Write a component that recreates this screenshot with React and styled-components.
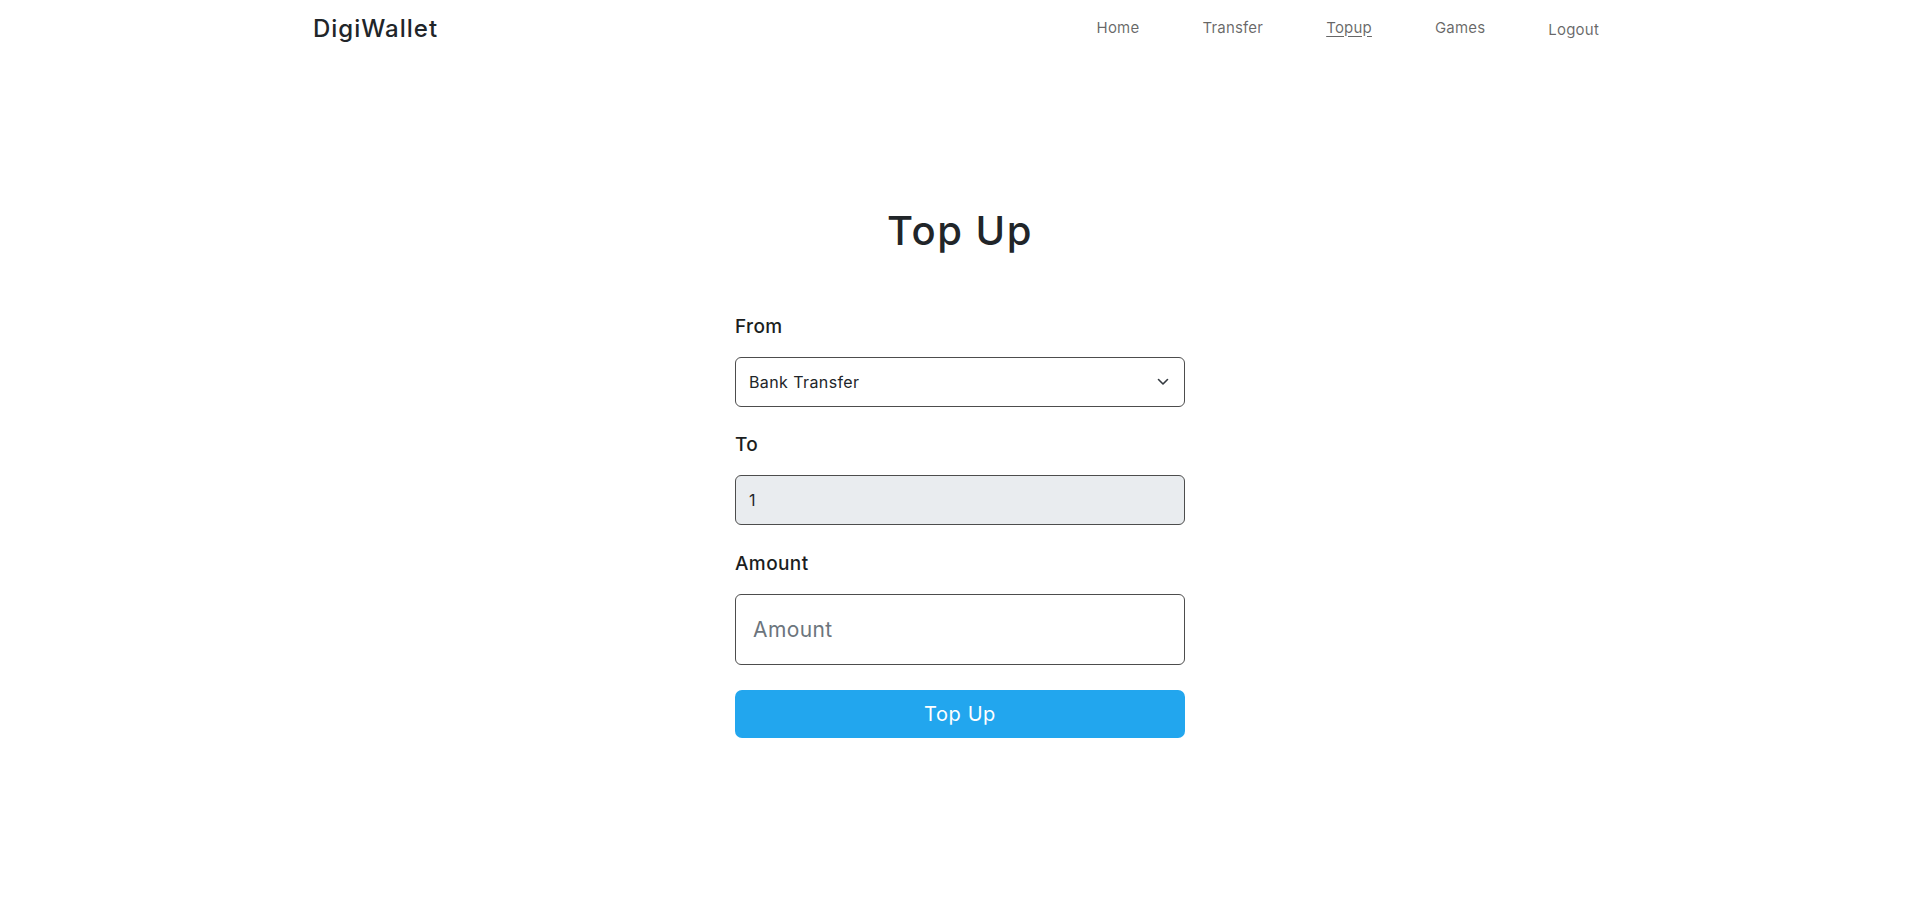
import React from "react";
import styled, { createGlobalStyle } from "styled-components";

const Global = createGlobalStyle`
  html, body { margin: 0; padding: 0; background: #fff; }
  body { font-family: "Inter", "DejaVu Sans", sans-serif; color: #212529; }
  * { box-sizing: border-box; }
`;

const Nav = styled.nav`
  height: 56px;
  display: flex;
  align-items: center;
`;

const NavInner = styled.div`
  width: 1320px;
  margin: 0 auto;
  padding: 0 12px 0 13px;
  display: flex;
  align-items: center;
  justify-content: space-between;
`;

const Brand = styled.a`
  font-size: 24px;
  font-weight: 500;
  color: #212529;
  text-decoration: none;
  letter-spacing: 1px;
`;

const Links = styled.div`
  display: flex;
  align-items: center;
  gap: 63px;
  padding-right: 9px;
`;

const NavLink = styled.a`
  font-size: 15px;
  color: rgba(0, 0, 0, 0.6);
  letter-spacing: 0.2px;
  text-decoration: ${(p) => (p.$active ? "underline" : "none")};
  text-underline-offset: 3px;
  position: relative;
  top: ${(p) => (p.$low ? "1px" : "-1px")};
`;

const Main = styled.main`
  display: flex;
  flex-direction: column;
  align-items: center;
  padding-top: 150px;
`;

const Title = styled.h1`
  margin: 0 0 60px;
  font-size: 40px;
  font-weight: 500;
  color: #212529;
  letter-spacing: 1.5px;
`;

const Form = styled.form`
  width: 450px;
  display: flex;
  flex-direction: column;
`;

const Label = styled.label`
  font-size: 19px;
  font-weight: 500;
  letter-spacing: 0.4px;
  color: #1b1e21;
  margin-bottom: 19px;
`;

const Field = styled.div`
  margin-bottom: ${(p) => p.$gap || 28}px;
`;

const Control = styled.div`
  height: ${(p) => (p.$large ? "71px" : "50px")};
  border: 1px solid #4d4d4d;
  border-radius: 6px;
  background: ${(p) => (p.$disabled ? "#e9ecef" : "#fff")};
  display: flex;
  align-items: center;
  justify-content: space-between;
  padding: ${(p) => (p.$large ? "0 17px" : "0 15px 0 13px")};
  font-size: ${(p) => (p.$large ? "21px" : "16px")};
  letter-spacing: 0.4px;
  color: ${(p) => (p.$placeholder ? "#6c757d" : "#212529")};
`;

const Button = styled.button`
  height: 48px;
  border: none;
  border-radius: 7px;
  background: #22a6ee;
  color: #fff;
  font-family: inherit;
  font-size: 20px;
  letter-spacing: 0.6px;
  font-weight: 400;
  margin-top: -2px;
  cursor: pointer;
`;

const Chevron = () => (
  <svg width="12" height="8" viewBox="0 0 12 8" fill="none">
    <path d="M1.5 1.5L6 6L10.5 1.5" stroke="#343a40" strokeWidth="1.6" strokeLinecap="round" strokeLinejoin="round" />
  </svg>
);

export default function App() {
  return (
    <>
      <Global />
      <Nav>
        <NavInner>
          <Brand>DigiWallet</Brand>
          <Links>
            <NavLink>Home</NavLink>
            <NavLink>Transfer</NavLink>
            <NavLink $active>Topup</NavLink>
            <NavLink>Games</NavLink>
            <NavLink $low>Logout</NavLink>
          </Links>
        </NavInner>
      </Nav>
      <Main>
        <Title>Top Up</Title>
        <Form>
          <Label>From</Label>
          <Field $gap={26}>
            <Control>
              <span>Bank Transfer</span>
              <Chevron />
            </Control>
          </Field>
          <Label>To</Label>
          <Field $gap={27}>
            <Control $disabled>1</Control>
          </Field>
          <Label>Amount</Label>
          <Field $gap={27}>
            <Control $large $placeholder>Amount</Control>
          </Field>
          <Button type="button">Top Up</Button>
        </Form>
      </Main>
    </>
  );
}
